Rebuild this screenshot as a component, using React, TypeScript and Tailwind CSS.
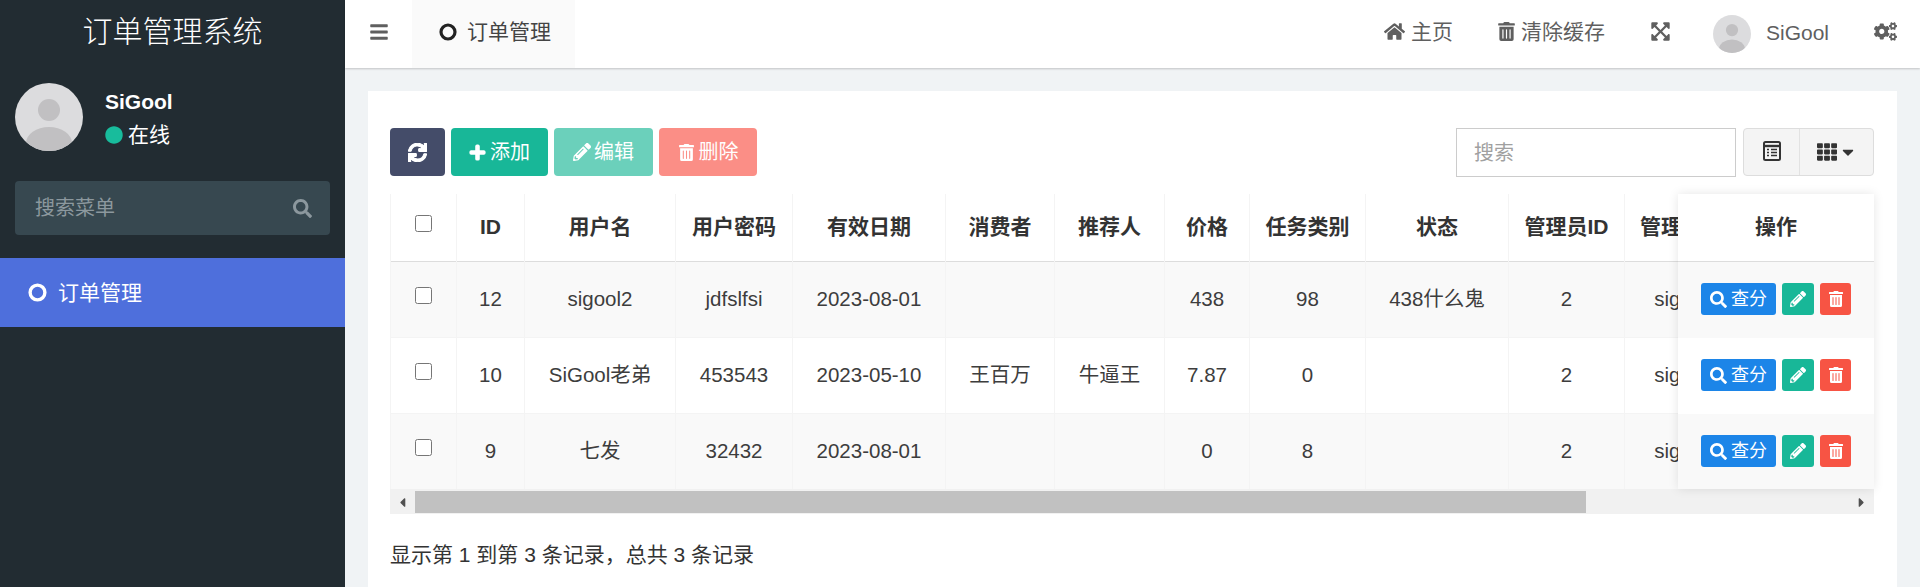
import {
  FaBars,
  FaCaretDown,
  FaCaretLeft,
  FaCaretRight,
  FaCircle,
  FaCogs,
  FaExpandArrowsAlt,
  FaHome,
  FaPencilAlt,
  FaPlus,
  FaSearch,
  FaSync,
  FaTh,
  FaTrashAlt,
} from 'react-icons/fa'

const columns = [
  { title: '', width: 'w-[66px]' },
  { title: 'ID', width: 'w-[68px]' },
  { title: '用户名', width: 'w-[151px]' },
  { title: '用户密码', width: 'w-[117px]' },
  { title: '有效日期', width: 'w-[153px]' },
  { title: '消费者', width: 'w-[109px]' },
  { title: '推荐人', width: 'w-[110px]' },
  { title: '价格', width: 'w-[85px]' },
  { title: '任务类别', width: 'w-[116px]' },
  { title: '状态', width: 'w-[143px]' },
  { title: '管理员ID', width: 'w-[116px]' },
  { title: '管理员名称', width: 'w-[136px]' },
]

const rows = [
  ['12', 'sigool2', 'jdfslfsi', '2023-08-01', '', '', '438', '98', '438什么鬼', '2', 'sigool22'],
  ['10', 'SiGool老弟', '453543', '2023-05-10', '王百万', '牛逼王', '7.87', '0', '', '2', 'sigool22'],
  ['9', '七发', '32432', '2023-08-01', '', '', '0', '8', '', '2', 'sigool22'],
]

function Avatar({ className }: { className: string }) {
  return (
    <div className={`rounded-full overflow-hidden ${className}`}>
      <svg viewBox="0 0 68 68" className="w-full h-full">
        <rect width="68" height="68" fill="#dcdcde" />
        <ellipse cx="34" cy="27" rx="11" ry="11" fill="#c1c0c2" />
        <ellipse cx="34" cy="60" rx="23" ry="16" fill="#c1c0c2" />
      </svg>
    </div>
  )
}

function Ring({ className }: { className: string }) {
  return (
    <svg viewBox="0 0 18 18" className={className}>
      <circle cx="9" cy="9" r="7" fill="none" stroke="currentColor" strokeWidth="3.2" />
    </svg>
  )
}

function ListIcon({ className }: { className: string }) {
  return (
    <svg viewBox="0 0 18 20" className={className}>
      <rect x="1" y="1" width="16" height="18" rx="1.5" fill="none" stroke="currentColor" strokeWidth="2" />
      <path d="M1 5h16" stroke="currentColor" strokeWidth="2.4" />
      <path d="M4 8.5h2M8 8.5h6M4 11.5h2M8 11.5h6M4 14.5h2M8 14.5h6" stroke="currentColor" strokeWidth="1.6" />
    </svg>
  )
}

function Sidebar() {
  return (
    <aside className="w-[345px] shrink-0 bg-[#222c32] text-white">
      <div className="h-[68px] pb-[5px] flex items-center justify-center text-[30px] font-light">订单管理系统</div>
      <div className="mt-[15px] px-[15px] flex">
        <Avatar className="w-[68px] h-[68px]" />
        <div className="ml-[22px] pt-[6px]">
          <div className="text-[21px] font-bold leading-[26px]">SiGool</div>
          <div className="mt-[4px] flex items-center gap-[5px] text-[21px] leading-[32px]">
            <FaCircle className="text-[#18bc9c] text-[18px]" />
            在线
          </div>
        </div>
      </div>
      <div className="mt-[30px] mx-[15px] h-[54px] rounded-[4px] bg-[#374850] pl-[20px] pr-[18px] flex items-center justify-between text-[20px] text-[#8c989e]">
        <span>搜索菜单</span>
        <FaSearch className="text-[19px]" />
      </div>
      <div className="mt-[23px] h-[69px] bg-[#4e6fdc] pl-[28px] flex items-center gap-[11px] text-[21px]">
        <Ring className="w-[19px] h-[19px]" />
        订单管理
      </div>
    </aside>
  )
}

function Header() {
  return (
    <header className="h-[68px] shrink-0 bg-white shadow-[0_1px_2px_rgba(0,0,0,0.2)] flex items-center text-[21px] text-[#5f5f5f] relative">
      <div className="ml-[24px] pb-[5px]">
        <FaBars className="text-[20px]" />
      </div>
      <div className="ml-[23px] w-[163px] h-full bg-[#fafafa] pb-[5px] flex items-center pl-[27px] gap-[10px] text-[#444]">
        <Ring className="w-[18px] h-[18px] text-[#222]" />
        订单管理
      </div>
      <div className="ml-auto pr-[23px] flex items-center">
        <div className="flex items-center pb-[5px]">
          <FaHome className="text-[21px] mr-[6px]" />
          主页
          <FaTrashAlt className="ml-[44px] mr-[5px] text-[19px]" />
          清除缓存
          <FaExpandArrowsAlt className="ml-[45px] text-[21px]" />
        </div>
        <Avatar className="ml-[42px] w-[38px] h-[38px]" />
        <span className="ml-[15px] pb-[3px] text-[21px]">SiGool</span>
        <div className="ml-[45px] pb-[5px]">
          <FaCogs className="text-[23px]" />
        </div>
      </div>
    </header>
  )
}

function Toolbar() {
  return (
    <div className="flex items-start">
      <div className="flex gap-[6px] text-[20px] text-white">
        <button className="w-[55px] h-[48px] rounded-[4px] bg-[#444c69] flex items-center justify-center">
          <FaSync className="text-[19px] stroke-[30]" />
        </button>
        <button className="w-[97px] h-[48px] rounded-[4px] bg-[#18b798] flex items-center justify-center gap-[4px]">
          <FaPlus className="text-[17px] stroke-[40]" />
          添加
        </button>
        <button className="w-[99px] h-[48px] rounded-[4px] bg-[#6bd0bb] flex items-center justify-center gap-[3px]">
          <FaPencilAlt className="text-[18px]" />
          编辑
        </button>
        <button className="w-[98px] h-[48px] rounded-[4px] bg-[#fb8e86] flex items-center justify-center gap-[4px]">
          <FaTrashAlt className="text-[17px]" />
          删除
        </button>
      </div>
      <div className="ml-auto w-[280px] h-[49px] border border-[#ccc] pl-[17px] flex items-center text-[20px] text-[#a0a0a0]">
        搜索
      </div>
      <div className="ml-[7px] w-[131px] h-[48px] rounded-[4px] border border-[#ddd] bg-[#f4f4f4] flex text-[#333]">
        <div className="w-[56px] pb-[3px] flex items-center justify-center border-r border-[#e2e2e2]">
          <ListIcon className="w-[18px] h-[20px]" />
        </div>
        <div className="flex-1 flex items-center justify-center gap-[2px]">
          <FaTh className="text-[20px]" />
          <FaCaretDown className="text-[18px]" />
        </div>
      </div>
    </div>
  )
}

function RowActions() {
  return (
    <div className="flex justify-center gap-[6px] text-white">
      <button className="w-[75px] h-[32px] rounded-[3px] bg-[#1c85e8] flex items-center justify-center gap-[4px] text-[18px]">
        <FaSearch className="text-[17px]" />
        查分
      </button>
      <button className="w-[32px] h-[32px] rounded-[3px] bg-[#18b798] flex items-center justify-center">
        <FaPencilAlt className="text-[16px]" />
      </button>
      <button className="w-[31px] h-[32px] rounded-[3px] bg-[#f75444] flex items-center justify-center">
        <FaTrashAlt className="text-[16px]" />
      </button>
    </div>
  )
}

function DataTable() {
  return (
    <div className="relative mt-[17px] h-[320px] text-[20.5px] text-[#3d3d3d]">
      <div className="overflow-hidden h-[295px]">
        <table className="table-fixed w-[1370px] border-collapse text-center">
          <colgroup>
            {columns.map((c, i) => (
              <col key={i} className={c.width} />
            ))}
          </colgroup>
          <thead>
            <tr className="h-[67px] border-b border-[#ddd]">
              {columns.map((c, i) => (
                <th key={i} className="border-r border-l border-[#f4f4f4] pb-[2px] font-bold whitespace-nowrap text-[21px] text-[#333]">
                  {i === 0 ? <input type="checkbox" readOnly className="block mx-auto mb-[5px] w-[17px] h-[17px]" /> : c.title}
                </th>
              ))}
            </tr>
          </thead>
          <tbody>
            {rows.map((row, i) => (
              <tr key={i} className={`h-[76px] border-b border-[#f4f4f4] ${i % 2 === 0 ? 'bg-[#f9f9f9]' : 'bg-white'}`}>
                <td className="border-r border-l border-[#f4f4f4]">
                  <input type="checkbox" readOnly className="block mx-auto mb-[8px] w-[17px] h-[17px]" />
                </td>
                {row.map((cell, j) => (
                  <td key={j} className="border-r border-[#f4f4f4] whitespace-nowrap">
                    {cell}
                  </td>
                ))}
              </tr>
            ))}
          </tbody>
        </table>
      </div>
      <div className="h-[25px] bg-[#f1f1f1] flex items-center pt-[1px] text-[#505050]">
        <div className="w-[25px] flex justify-center">
          <FaCaretLeft className="text-[15px]" />
        </div>
        <div className="w-[1171px] h-[22px] bg-[#c1c1c1]" />
        <div className="ml-auto w-[25px] flex justify-center">
          <FaCaretRight className="text-[15px]" />
        </div>
      </div>
      <div className="absolute right-0 top-0 w-[196px] h-[295px] overflow-hidden bg-white shadow-[0_0_10px_rgba(0,0,0,0.1)]">
        <div className="h-[68px] pb-[2px] bg-white border-b border-[#ddd] flex items-center justify-center font-bold text-[21px] text-[#333]">操作</div>
        {rows.map((_, i) => (
          <div key={i} className={`h-[76px] pb-[2px] flex items-center ${i % 2 === 0 ? 'bg-[#f9f9f9]' : 'bg-white'}`}>
            <div className="w-full">
              <RowActions />
            </div>
          </div>
        ))}
      </div>
    </div>
  )
}

export default function App() {
  return (
    <div className="w-[1920px] h-[587px] overflow-hidden flex font-['Liberation_Sans','Noto_Sans_CJK_SC',sans-serif]">
      <Sidebar />
      <main className="flex-1 flex flex-col bg-[#f0f3f5]">
        <Header />
        <div className="flex-1 px-[23px] pt-[23px]">
          <div className="h-full bg-white pl-[22px] pr-[23px] pt-[37px]">
            <Toolbar />
            <DataTable />
            <div className="mt-[27px] leading-[28px] text-[21px] text-[#333]">显示第 1 到第 3 条记录，总共 3 条记录</div>
          </div>
        </div>
      </main>
    </div>
  )
}
